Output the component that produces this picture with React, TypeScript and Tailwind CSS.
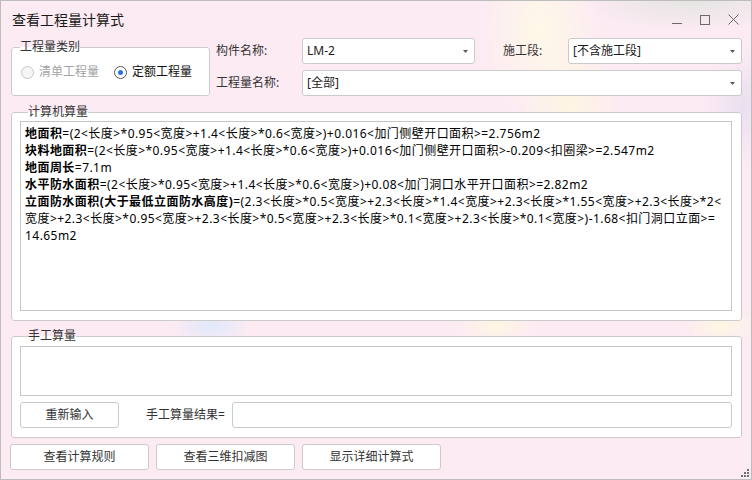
import { ReactNode } from 'react'

// one row of the formula box: optional bold name, then the formula text
const rows: [string, string][] = [
  ['地面积', '=(2<长度>*0.95<宽度>+1.4<长度>*0.6<宽度>)+0.016<加门侧壁开口面积>=2.756m2'],
  ['块料地面积', '=(2<长度>*0.95<宽度>+1.4<长度>*0.6<宽度>)+0.016<加门侧壁开口面积>-0.209<扣圈梁>=2.547m2'],
  ['地面周长', '=7.1m'],
  ['水平防水面积', '=(2<长度>*0.95<宽度>+1.4<长度>*0.6<宽度>)+0.08<加门洞口水平开口面积>=2.82m2'],
  ['立面防水面积(大于最低立面防水高度)', '=(2.3<长度>*0.5<宽度>+2.3<长度>*1.4<宽度>+2.3<长度>*1.55<宽度>+2.3<长度>*2<'],
  ['', '宽度>+2.3<长度>*0.95<宽度>+2.3<长度>*0.5<宽度>+2.3<长度>*0.1<宽度>+2.3<长度>*0.1<宽度>)-1.68<扣门洞口立面>='],
  ['', '14.65m2'],
]

function Combo({ value, className }: { value: string; className?: string }) {
  return (
    <div className={`h-[26px] flex items-center justify-between pl-[4px] pr-[6px] bg-white border border-[#cbcbcb] rounded-[3px] text-[#1a1a1a] ${className ?? ''}`}>
      <span>{value}</span>
      <svg width="5" height="3" viewBox="0 0 5 3">
        <path d="M0 0h5L2.5 3z" fill="#5a5a5a" />
      </svg>
    </div>
  )
}

function Btn({ children, className }: { children: ReactNode; className?: string }) {
  return (
    <button className={`h-[26px] bg-white border border-[#cbcbcb] rounded-[3px] text-[#333] ${className ?? ''}`}>
      {children}
    </button>
  )
}

function Group({ title, children, className }: { title: string; children: ReactNode; className?: string }) {
  return (
    <fieldset className={`border border-[#cbcbcb] rounded-[3px] bg-white ${className ?? ''}`}>
      <legend className="ml-[8px] px-0 leading-[16px] text-[#333]">{title}</legend>
      {children}
    </fieldset>
  )
}

export default function App() {
  return (
    <div className="relative w-[752px] h-[480px] flex flex-col border border-[#bdbdbd] text-[12px] font-['Noto_Sans','Noto_Sans_CJK_SC',sans-serif] bg-[radial-gradient(ellipse_110px_30px_at_92%_0%,rgba(228,228,226,0.95),transparent),radial-gradient(ellipse_60px_90px_at_72%_6%,rgba(255,250,230,0.9),transparent),radial-gradient(ellipse_50px_70px_at_76%_22%,rgba(255,248,222,0.8),transparent),radial-gradient(ellipse_40px_60px_at_99%_22%,rgba(232,222,240,0.9),transparent),radial-gradient(ellipse_40px_20px_at_28%_68%,rgba(222,232,252,0.9),transparent),radial-gradient(ellipse_40px_20px_at_66%_68%,rgba(255,248,225,0.9),transparent),radial-gradient(ellipse_40px_20px_at_96%_68%,rgba(255,248,225,0.9),transparent),linear-gradient(#fcebf3,#fcebf3)]">
      {/* title bar */}
      <div className="h-[37px] shrink-0 flex items-center pl-[11px] pr-[12px]">
        <span className="flex-1 text-[14px] text-[#1a1a1a]">查看工程量计算式</span>
        <div className="flex items-center gap-[18px] text-[#6a6a6a]">
          <svg width="10" height="10" viewBox="0 0 10 10">
            <path d="M0 8.5h10" stroke="currentColor" strokeWidth="1" />
          </svg>
          <svg width="10" height="10" viewBox="0 0 10 10">
            <rect x="0.5" y="0.5" width="9" height="9" fill="none" stroke="currentColor" strokeWidth="1" />
          </svg>
          <svg width="11" height="11" viewBox="0 0 11 11">
            <path d="M0.5 0.5l10 10M10.5 0.5l-10 10" stroke="currentColor" strokeWidth="1" />
          </svg>
        </div>
      </div>

      <div className="flex-1 flex flex-col pl-[10px] pr-[9px]">
        {/* top section */}
        <div className="flex items-start">
          <Group title="工程量类别" className="w-[199px] h-[57px] mt-[1px]">
            <div className="flex items-center pt-[8px] pl-[9px]">
              <span className="w-[13px] h-[13px] rounded-full border border-[#c6c6c6] bg-[#f5f5f5]" />
              <span className="ml-[5px] text-[#a3a3a3]">清单工程量</span>
              <span className="ml-[15px] w-[13px] h-[13px] rounded-full border border-[#5c5c5c] bg-white flex items-center justify-center">
                <span className="w-[5px] h-[5px] rounded-full bg-[#2b76de]" />
              </span>
              <span className="ml-[5px] text-[#111]">定额工程量</span>
            </div>
          </Group>
          <div className="ml-[6px] flex-1 grid grid-cols-[86px_173px_93px_1fr] gap-y-[6px] items-center text-[#333]">
            <span>构件名称:</span>
            <Combo value="LM-2" />
            <span className="pl-[28px]">施工段:</span>
            <Combo value="[不含施工段]" />
            <span>工程量名称:</span>
            <Combo value="[全部]" className="col-span-3" />
          </div>
        </div>

        {/* computed formulas */}
        <Group title="计算机算量" className="mt-[8px] h-[217px] pl-[8px] pr-[9px]">
          <div className="mt-[1px] h-[190px] border border-[#c6c6c6] bg-white pl-[4px] pt-[3px] leading-[17px] tracking-[0.45px] text-black">
            {rows.map(([name, rest], i) => (
              <div key={i} className="whitespace-nowrap">
                {name && <span className="font-bold">{name}</span>}
                {rest}
              </div>
            ))}
          </div>
        </Group>

        {/* manual input */}
        <Group title="手工算量" className="mt-[7px] h-[110px] pl-[8px] pr-[9px]">
          <div className="mt-[2px] h-[50px] border border-[#c6c6c6] bg-white" />
          <div className="mt-[6px] flex items-center">
            <Btn className="w-[99px]">重新输入</Btn>
            <span className="ml-[27px] w-[86px] text-[#333]">手工算量结果=</span>
            <div className="flex-1 h-[26px] border border-[#cbcbcb] rounded-[3px] bg-white" />
          </div>
        </Group>

        <div className="mt-[6px] -ml-[1px] flex gap-[7px]">
          <Btn className="w-[139px]">查看计算规则</Btn>
          <Btn className="w-[139px]">查看三维扣减图</Btn>
          <Btn className="w-[139px]">显示详细计算式</Btn>
        </div>
      </div>

      {/* resize grip */}
      <svg className="absolute right-[2px] bottom-[2px]" width="8" height="8" viewBox="0 0 8 8">
        <g fill="#707070">
          <rect x="6" y="0" width="2" height="2" />
          <rect x="3" y="3" width="2" height="2" />
          <rect x="6" y="3" width="2" height="2" />
          <rect x="0" y="6" width="2" height="2" />
          <rect x="3" y="6" width="2" height="2" />
          <rect x="6" y="6" width="2" height="2" />
        </g>
      </svg>
    </div>
  )
}
